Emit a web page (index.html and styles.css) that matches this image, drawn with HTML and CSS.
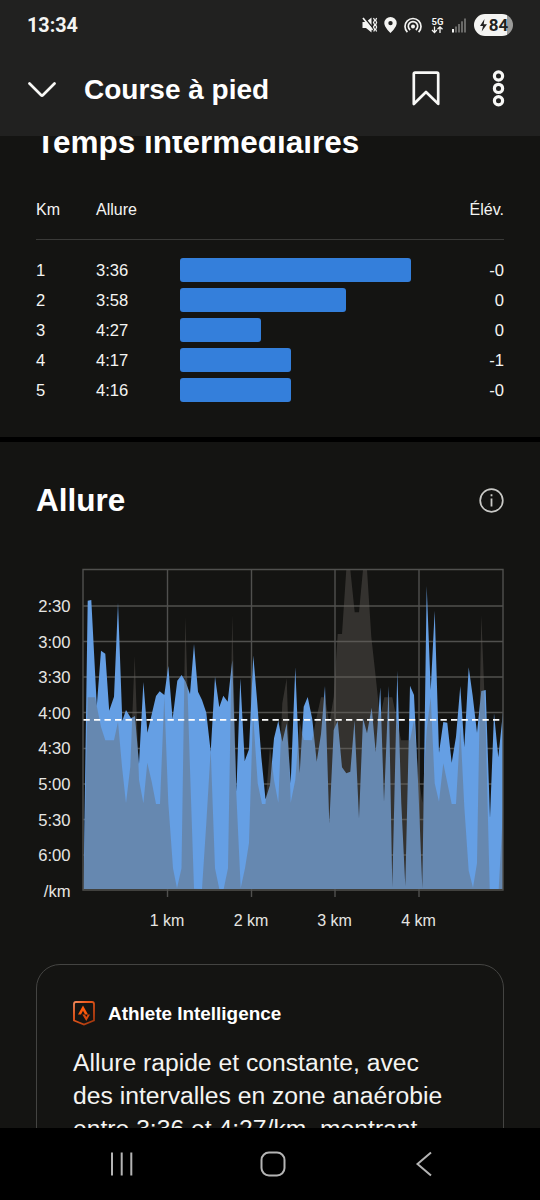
FILE: index.html
```html
<!DOCTYPE html>
<html lang="fr">
<head>
    <meta charset="UTF-8">
    <title>Course à pied</title>
    <link rel="stylesheet" href="styles.css">
</head>
<body>
    <header>
        <div class="status">
            <span class="clock">13:34</span>
            <!-- mute, location, hotspot, 5G, signal -->
            <svg class="status-icons" width="106" height="20" viewBox="0 0 106 20">
                <g fill="#f4f4f2">
                    <path d="M1.500 7h3.500l5.500-4.500v15L5 13H1.500z"/>
                    <path d="M29.500 2a6.200 6.200 0 0 0-6.200 6.200c0 4 6.200 9.800 6.200 9.800s6.200-5.800 6.200-9.800A6.200 6.200 0 0 0 29.500 2zm0 3.900a2.200 2.200 0 1 1 0 4.400 2.200 2.200 0 0 1 0-4.400z"/>
                    <circle cx="52" cy="11.500" r="2"/>
                </g>
                <path d="M3 2.200l10 12" stroke="#212120" stroke-width="1.500"/>
                <g fill="none" stroke="#f4f4f2" stroke-width="1.700">
                    <path d="M2 3l9.500 12"/>
                    <path d="M12.500 3l1.200 2.200-1.200 2.300 1.200 2.300-1.200 2.300 1.200 2.300-1 2M15.600 3l-1 2.200 1 2.300-1 2.300 1 2.300-1 2.300 1 2" stroke-width="1.200"/>
                    <path d="M49.200 15a4.700 4.700 0 1 1 5.600 0"/>
                    <path d="M46.400 17.200a8 8 0 1 1 11.200 0"/>
                    <path d="M73.500 11.500v6M71 15l2.500 2.600 2.300-2.600M79 18v-6M76.500 14.300l2.500-2.500 2.500 2.500" stroke-width="1.300"/>
                </g>
                <text x="70.500" y="9.500" class="net">5G</text>
                <g fill="#6a6a68">
                    <rect x="91" y="14" width="2" height="3.500" fill="#f4f4f2"/>
                    <rect x="94" y="11.500" width="2" height="6"/>
                    <rect x="97" y="9" width="2" height="8.500"/>
                    <rect x="100" y="6.300" width="2" height="11.200"/>
                    <rect x="103" y="3.500" width="2" height="14"/>
                </g>
            </svg>
            <span class="battery">
                <svg width="9" height="13" viewBox="0 0 9 13"><path d="M5.500 0L1 7h3l-1.300 5.500L8 5.200H4.700z" fill="#212120"/></svg>84
            </span>
        </div>
        <div class="topbar">
            <svg class="down" width="28" height="16" viewBox="0 0 28 16"><path d="M1.500 1.500L13 13q1 1 2 0L26.500 1.500"/></svg>
            <h1>Course à pied</h1>
            <svg class="bookmark" width="28" height="35" viewBox="0 0 28 35"><path d="M3 1.700h22q1.200 0 1.200 1.200v30L14 21 1.800 33V2.900q0-1.200 1.200-1.200z"/></svg>
            <svg class="more" width="13" height="37" viewBox="0 0 13 37">
                <circle cx="6.500" cy="6" r="4.100"/><circle cx="6.500" cy="18.400" r="4.100"/><circle cx="6.500" cy="30.800" r="4.100"/>
            </svg>
        </div>
    </header>

    <main>
        <section class="splits">
            <h2>Temps intermédiaires</h2>
            <div class="row head"><span>Km</span><span>Allure</span><span></span><span>Élév.</span></div>
            <div class="row"><span>1</span><span>3:36</span><i class="bar" style="width:231px"></i><span>-0</span></div>
            <div class="row"><span>2</span><span>3:58</span><i class="bar" style="width:166px"></i><span>0</span></div>
            <div class="row"><span>3</span><span>4:27</span><i class="bar" style="width:80.500px"></i><span>0</span></div>
            <div class="row"><span>4</span><span>4:17</span><i class="bar" style="width:110.500px"></i><span>-1</span></div>
            <div class="row"><span>5</span><span>4:16</span><i class="bar" style="width:110.500px"></i><span>-0</span></div>
        </section>

        <section class="pace">
            <div class="title">
                <h2>Allure</h2>
                <svg width="25" height="25" viewBox="0 0 25 25">
                    <circle cx="12.500" cy="12.500" r="11.300" fill="none" stroke="#c9c9c6" stroke-width="1.700"/>
                    <path d="M12.500 6.200v2M12.500 10.500v8" stroke="#c9c9c6" stroke-width="1.800"/>
                </svg>
            </div>

            <svg class="chart" width="468" height="370" viewBox="36 560 468 370">
                <path class="grid" d="M83 606H503M83 641.500H503M83 677H503M83 712.500H503M83 748.500H503M83 784H503M83 819.500H503M83 855H503M167.500 569V897M251.500 569V897M335 569V897M419 569V897"/>
                <!-- pace -->
                <path class="speed" d="M83.500 889L87.700 600.700 91.300 600 96.800 706 101 650.700 105.300 653.700 109.200 710.700 114 696.700 118 602.700 122.300 720.700 126 710 131 718.300 135 716 139 764 143.400 682 147.400 732.700 156 696 159.700 691.300 164.300 695 168.300 666 172.600 718.700 177.300 680.700 181.600 675 185.600 681.600 190 694 194 644 198 691.700 202 700 206.300 712.700 210.700 751.700 215 676.700 219.300 707.300 223.300 695.700 227.700 701.700 232.300 660 236.400 791.700 240.300 678.300 244.700 761 249 749.300 253.300 655.500 257.300 703 261.300 756.700 265.500 799.300 270 785 274 738.300 278.300 720.700 282.300 741.700 286.700 723.300 290.700 783.300 295.300 667.300 299.700 773.300 303.700 706.700 307.700 697 312.300 719.300 316.700 761.700 321 734 325 686 329.300 823.300 333.700 730 337.700 720.700 342 767.300 346.300 773.300 350.300 771.700 354.500 720.300 359 818.300 363 718.300 367 733.300 371.700 707.700 375.700 752.300 380.300 687.300 384 801.700 388.700 686 392.300 887.300 397.300 670.700 401.300 803.300 405.300 886 410 685.700 414 695 418.300 786.700 422.300 888.300 426.700 586 430.700 690 434.700 610.700 439 752.700 443.300 722 447.300 722.700 451.700 762.700 456 736.700 460.300 686 464.300 747.300 468.700 667.300 472.700 696 477 732.700 481.300 691 485.700 690 490 818.300 494 713.300 498.300 757.300 503 712V889z"/>
                <!-- elevation -->
                <path class="elev" d="M83.500 889L87.700 697.300 95 697.300 101 727 105.300 740.300 114 740.300 118 721.700 122 766.700 126 803.300 130.300 766.700 134.700 656 139 780 143.400 803.300 147.300 762.700 151.700 781.700 156 804 160 804 164.300 696.700 168.300 803 173 868.300 177 888.300 181.500 868.300 185.300 616.700 189.700 760 194 888.700 202 889 206.300 823.300 210.700 750 215 868.300 219.300 889 223.700 889 228 868.300 232.300 615 236.300 793.300 240.700 888.300 245 868.300 249 843 253 713 257.700 783.300 262 804 265.500 804 270 746.700 274 780 278.300 802.700 282.300 703.300 286.700 678.300 290.700 802.700 295.300 780 299.700 721.700 303.700 740 312 740.300 316.700 716.700 321 697.300 325 697.300 329.300 723.300 333.700 697 337.700 634 342 634 346.300 569.500 350.300 569.500 354.700 612.300 359 612.300 363 569.500 367 569.500 371.300 636.700 375.700 676.700 380 718 384.300 697.300 392.300 697.300 401 740.300 410 740.300 414 720 418.300 773 422.300 802.700 426.700 730 430.700 697 434.700 783.300 439 801.700 443.300 763.300 451.700 804 456 804 460.300 726.700 464.300 806.700 468.700 870.700 473 887.700 477 863.300 481.300 615 485.700 726.700 489.700 889 498.700 889 503 810V889z"/>
                <path class="frame" d="M83 569.500H503V890H83z"/>
                <path class="average" d="M83.500 719.800H503"/>
                <g class="labels-y">
                    <text x="70.500" y="612">2:30</text>
                    <text x="70.500" y="647.500">3:00</text>
                    <text x="70.500" y="683">3:30</text>
                    <text x="70.500" y="718.500">4:00</text>
                    <text x="70.500" y="754">4:30</text>
                    <text x="70.500" y="790">5:00</text>
                    <text x="70.500" y="825.500">5:30</text>
                    <text x="70.500" y="861">6:00</text>
                    <text x="70.500" y="896.500">/km</text>
                </g>
                <g class="labels-x">
                    <text x="167" y="925.500">1 km</text>
                    <text x="251" y="925.500">2 km</text>
                    <text x="334.500" y="925.500">3 km</text>
                    <text x="418.500" y="925.500">4 km</text>
                </g>
            </svg>

            <div class="card">
                <div class="card-title">
                    <svg width="22" height="25" viewBox="0 0 22 25">
                        <defs>
                            <linearGradient id="flame" x1="0" y1="0" x2="1" y2="1">
                                <stop offset="0" stop-color="#f08a5c"/><stop offset=".3" stop-color="#ee5a1c"/><stop offset="1" stop-color="#9c330b"/>
                            </linearGradient>
                        </defs>
                        <path d="M3 1h16q2 0 2 2v16.500L11 23.600 1 19.500V3q0-2 2-2z" fill="none" stroke="url(#flame)" stroke-width="1.800"/>
                        <path d="M5 13.500L10 4.500l5 9h-3l-2-3.800-2 3.800z" fill="#fc5a0c"/>
                        <path d="M9.300 13.500h2.500l1.500 2.500 1.500-2.500h2.200L13.300 20z" fill="#d9480c"/>
                    </svg>
                    <h3>Athlete Intelligence</h3>
                </div>
                <p>Allure rapide et constante, avec<br>des intervalles en zone anaérobie<br>entre 3:36 et 4:27/km, montrant</p>
            </div>
        </section>
    </main>

    <nav>
        <svg width="24" height="24" viewBox="0 0 24 24"><path d="M2 .5v23M11.700 .5v23M21.300 .5v23"/></svg>
        <svg class="home" width="26" height="26" viewBox="0 0 26 26"><rect x="1.500" y="1.500" width="23" height="23" rx="7.500"/></svg>
        <svg width="18" height="26" viewBox="0 0 18 26"><path d="M16 1.500L2.500 13 16 24.500"/></svg>
    </nav>
</body>
</html>
```
FILE: styles.css
```css
* {
    box-sizing: border-box;
}

body {
    margin: 0;
    height: 1200px;
    display: flex;
    flex-direction: column;
    overflow: hidden;
    background: #141412;
    color: #f4f4f2;
    font-family: "Liberation Sans", Arial, sans-serif;
}

h1, h2, h3, p {
    margin: 0;
}

/* top of the screen */
header {
    flex: none;
    height: 136px;
    background: #212120;
    z-index: 1;
}

.status {
    height: 50px;
    padding: 0 27px;
    display: flex;
    align-items: center;
}

.clock {
    flex: 1;
    font: bold 19.8px Roboto, sans-serif;
}

.status-icons {
    margin-right: 7px;
}

.net {
    font: bold 9.5px Roboto, sans-serif;
    fill: #f4f4f2;
}

.battery {
    width: 39px;
    height: 22px;
    border-radius: 11px;
    display: flex;
    align-items: center;
    justify-content: center;
    gap: 1px;
    background: linear-gradient(to right, #f4f4f2 84%, #9b9b99 84%);
    color: #212120;
    font: bold 17px Roboto, sans-serif;
}

.topbar {
    height: 76px;
    padding: 0 35px 0 28px;
    display: flex;
    align-items: center;
}

.topbar svg {
    fill: none;
    stroke: #f8f8f6;
    stroke-width: 2.7;
    stroke-linecap: round;
    stroke-linejoin: round;
}

.topbar .down {
    margin-top: 3px;
}

.topbar .more {
    stroke-width: 3.2;
}

.bookmark {
    margin-right: 52px;
}

h1 {
    flex: 1;
    margin-left: 28px;
    padding-top: 3px;
    font-size: 28px;
    line-height: 36px;
    color: #fff;
}

h2 {
    font-size: 31.5px;
    line-height: 36px;
    color: #fff;
}

main {
    flex: 1;
    min-height: 0;
    overflow: hidden;
}

section {
    padding: 0 36px;
}

/* splits table, its heading is half scrolled under the header */
.splits {
    height: 318px;
    border-bottom: 5px solid #000;
}

.splits h2 {
    margin-top: -12px;
}

.row {
    height: 30px;
    display: grid;
    grid-template-columns: 60px 84px 1fr 40px;
    align-items: center;
    font-size: 16.6px;
}

.row span {
    padding-top: 3px;
}

.row span:last-child {
    text-align: right;
}

.head {
    height: 79.5px;
    margin-bottom: 15px;
    padding-top: 38px;
    align-items: start;
    border-bottom: 1.5px solid #3a3a38;
    font-size: 16px;
}

.bar {
    height: 24px;
    border-radius: 3px;
    background: #347fdb;
}

/* pace chart */
.title {
    height: 118px;
    padding-top: 40px;
    display: flex;
    justify-content: space-between;
}

.title svg {
    margin-top: 6px;
}

.chart {
    display: block;
}

.grid, .frame {
    fill: none;
    stroke: #50504e;
    stroke-width: 1.4;
}

.speed {
    fill: #659fe4;
}

.elev {
    fill: rgba(103, 98, 93, .386);
}

.average {
    stroke: #fff;
    stroke-width: 1.8;
    stroke-dasharray: 6.3 4.2;
}

.chart text {
    fill: #e6e6e3;
    font-size: 16.6px;
}

.labels-y {
    text-anchor: end;
}

.labels-x {
    text-anchor: middle;
}

.chart .labels-x text {
    font-size: 16px;
}

/* summary card */
.card {
    height: 300px;
    margin-top: 34px;
    padding: 35px 36px;
    border: 1.5px solid #444442;
    border-radius: 24px;
}

.card-title {
    display: flex;
    align-items: center;
    gap: 13px;
}

h3 {
    padding-top: 2px;
    font-size: 18.9px;
    line-height: 24px;
    color: #fff;
}

.card p {
    margin-top: 20px;
    font-size: 24.7px;
    line-height: 33px;
}

/* android buttons */
nav {
    flex: none;
    height: 72px;
    padding: 0 107px 0 110px;
    display: flex;
    align-items: center;
    justify-content: space-between;
    background: #000;
}

nav svg {
    fill: none;
    stroke: #b4b4b4;
    stroke-width: 2;
}

.home {
    margin-right: 4px;
}
```
